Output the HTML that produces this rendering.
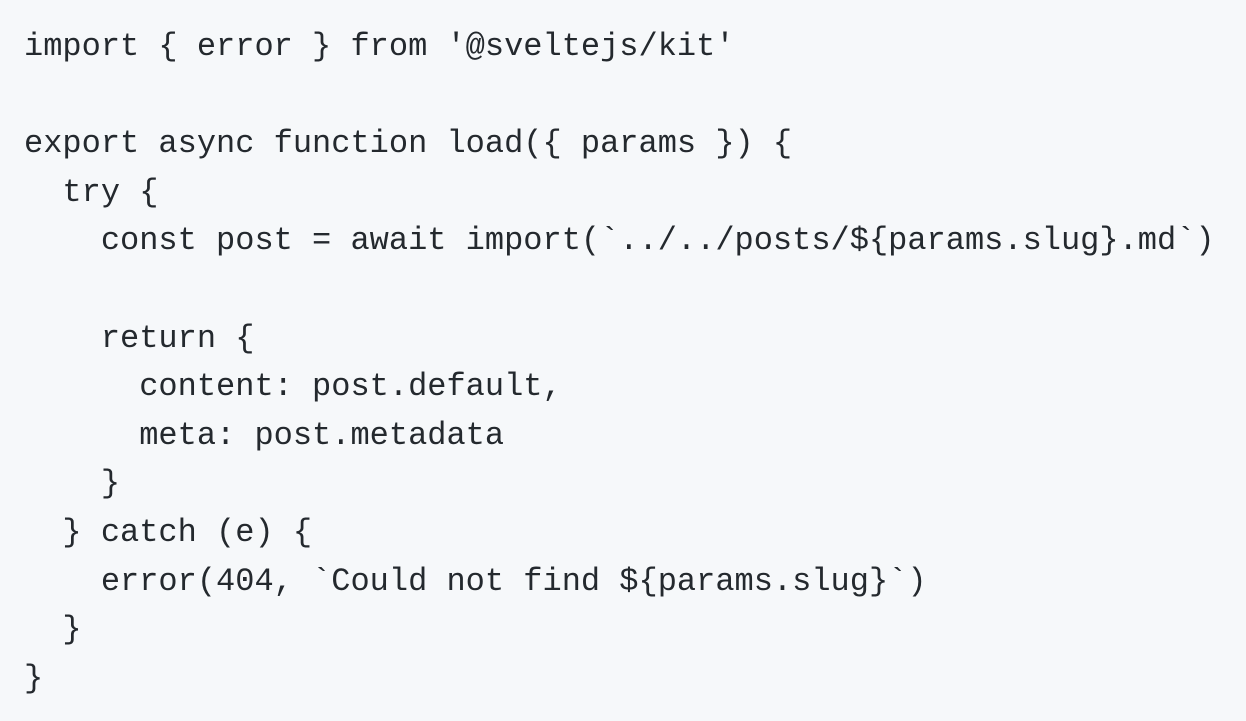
<!DOCTYPE html>
<html><head><style>
html,body{margin:0;padding:0;background:#f6f8fa;width:1246px;height:721px;overflow:hidden}
pre{margin:0;position:absolute;left:24px;top:23px;font-family:"Liberation Mono",monospace;font-size:32px;line-height:48.6px;color:#24292e}
</style></head><body>
<pre>import { error } from '@sveltejs/kit'

export async function load({ params }) {
  try {
    const post = await import(`../../posts/${params.slug}.md`)

    return {
      content: post.default,
      meta: post.metadata
    }
  } catch (e) {
    error(404, `Could not find ${params.slug}`)
  }
}</pre>
</body></html>
